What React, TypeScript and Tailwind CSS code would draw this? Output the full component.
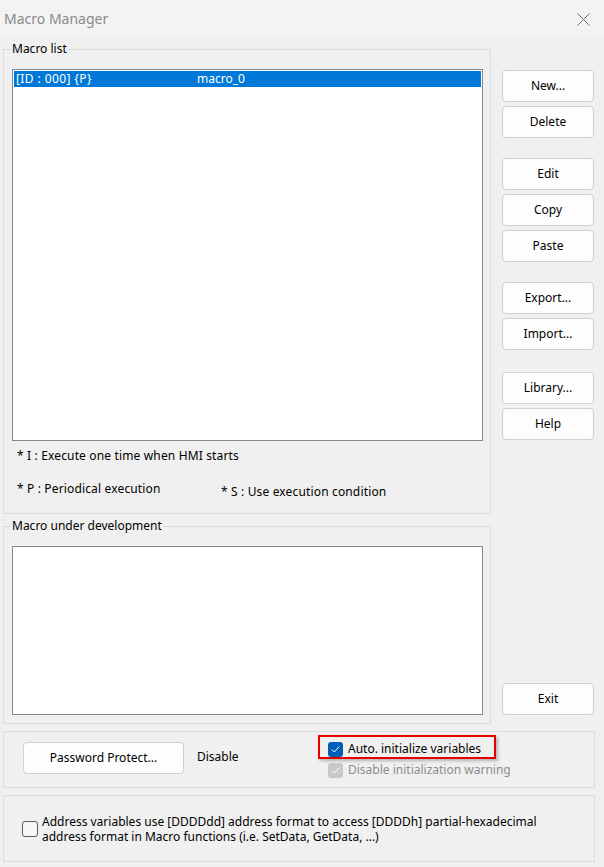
import React from "react";

const Btn = ({ label, className = "" }: { label: string; className?: string }) => (
  <div
    className={
      "h-[32px] w-full rounded-[4px] border border-[#d0d0d0] bg-[#fdfdfd] text-[12px] text-black flex items-center justify-center " +
      className
    }
  >
    {label}
  </div>
);

const Check = ({ disabled = false }: { disabled?: boolean }) => (
  <div
    className={
      "w-[15px] h-[15px] rounded-[3px] flex items-center justify-center shrink-0 " +
      (disabled ? "bg-[#c8c8c8]" : "bg-[#005fb8]")
    }
  >
    <svg width="11" height="11" viewBox="0 0 11 11">
      <path d="M2.2 5.8 L4.4 8 L8.8 3" fill="none" stroke="#ffffff" strokeWidth="1" strokeLinecap="round" strokeLinejoin="round" />
    </svg>
  </div>
);

const Legend = ({ text }: { text: string }) => (
  <div className="absolute left-[7px] top-[-9px] bg-[#f0f0f0] px-[1px] leading-[16px] text-[12px] text-black">
    {text}
  </div>
);

export default function App() {
  return (
    <div className="w-[604px] h-[867px] bg-[#f0f0f0] overflow-hidden font-['Noto_Sans',sans-serif] text-[12px] text-black">
      {/* Title bar */}
      <div className="h-[37px] bg-[#f3f3f3] flex items-center justify-between pl-[4px] pr-[14px] pt-[1px]">
        <span className="text-[14px] text-[#8a8a8a] leading-none">Macro Manager</span>
        <svg width="13" height="13" viewBox="0 0 13 13">
          <path d="M0.5 0.5 L12.5 12.5 M12.5 0.5 L0.5 12.5" stroke="#6e6e6e" strokeWidth="1" />
        </svg>
      </div>

      {/* Main row */}
      <div className="flex pl-[3px] pt-[12px]">
        <div className="w-[488px] flex flex-col">
          {/* Macro list */}
          <div className="relative h-[465px] border border-[#dcdcdc] pt-[19px] pl-[8px]">
            <Legend text="Macro list" />
            <div className="w-[471px] h-[372px] border border-[#828790] bg-white p-[1px]">
              <div className="h-[16px] bg-[#0078d7] text-white flex items-center leading-[16px]">
                <span className="w-[183px] pl-[2px] tracking-[0.4px]">[ID : 000] {"{P}"}</span>
                <span>macro_0</span>
              </div>
            </div>
            <div className="ml-[5px] mt-[7px] leading-[16px] tracking-[0.15px]">* I : Execute one time when HMI starts</div>
            <div className="ml-[5px] mt-[17px] flex items-start leading-[16px] tracking-[0.15px]">
              <span className="w-[204px]">* P : Periodical execution</span>
              <span className="mt-[3px]">* S : Use execution condition</span>
            </div>
          </div>

          {/* Macro under development */}
          <div className="relative mt-[12px] h-[198px] border border-[#dcdcdc] pt-[19px] pl-[8px]">
            <Legend text="Macro under development" />
            <div className="w-[471px] h-[169px] border border-[#828790] bg-white" />
          </div>
        </div>

        {/* Right buttons */}
        <div className="ml-[11px] w-[92px] flex flex-col pt-[21px] pb-[9px]">
          <Btn label="New..." />
          <Btn label="Delete" className="mt-[4px]" />
          <Btn label="Edit" className="mt-[20px]" />
          <Btn label="Copy" className="mt-[4px]" />
          <Btn label="Paste" className="mt-[4px]" />
          <Btn label="Export..." className="mt-[20px]" />
          <Btn label="Import..." className="mt-[4px]" />
          <Btn label="Library..." className="mt-[22px]" />
          <Btn label="Help" className="mt-[4px]" />
          <Btn label="Exit" className="mt-auto" />
        </div>
      </div>

      {/* Password group */}
      <div className="ml-[3px] mt-[7px] w-[592px] h-[57px] border border-[#dcdcdc] flex items-start pl-[19px]">
        <div className="mt-[10px] w-[161px] h-[32px] rounded-[4px] border border-[#d0d0d0] bg-[#fdfdfd] flex items-center justify-center">
          Password Protect...
        </div>
        <div className="ml-[13px] mt-[17px] w-[121px] leading-[16px]">Disable</div>
        <div className="mt-[3px] flex flex-col">
          <div className="w-[178px] h-[24px] border-2 border-[#e60000] shadow-[2px_2px_3px_rgba(0,0,0,0.25)] flex items-center pl-[8px] pt-[4px] gap-[5px]">
            <Check />
            <span className="leading-[16px]">Auto. initialize variables</span>
          </div>
          <div className="mt-[3px] ml-[10px] flex items-center gap-[5px]">
            <Check disabled />
            <span className="leading-[16px] text-[#8c8c8c]">Disable initialization warning</span>
          </div>
        </div>
      </div>

      {/* Address format group */}
      <div className="ml-[3px] mt-[7px] w-[592px] h-[67px] border border-[#dcdcdc] flex items-start pl-[18px] pt-[18px]">
        <div className="flex items-center gap-[4px]">
          <div className="w-[16px] h-[16px] rounded-[3px] border border-[#5a5a5a] bg-[#f6f6f6] shrink-0" />
          <div className="leading-[15px]">
            Address variables use [DDDDdd] address format to access [DDDDh] partial-hexadecimal
            <br />
            address format in Macro functions (i.e. SetData, GetData, ...)
          </div>
        </div>
      </div>
    </div>
  );
}
